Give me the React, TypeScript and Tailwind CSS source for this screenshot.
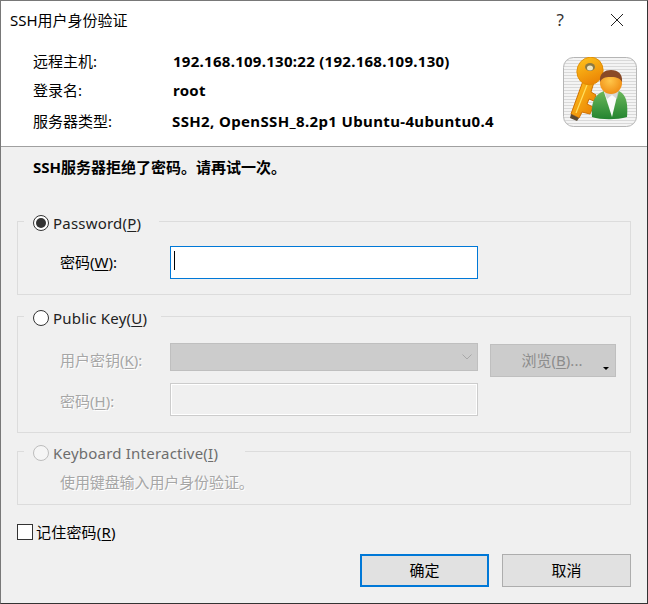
function KeyUserIcon() {
  return (
    <svg width="75" height="71" viewBox="0 0 75 71" className="shrink-0">
      <defs>
        <pattern id="stripes" width="3" height="3" patternUnits="userSpaceOnUse">
          <rect width="3" height="3" fill="#f4f4f4" />
          <rect width="3" height="1" fill="#d9d9d9" />
        </pattern>
        <linearGradient id="gold" x1="0" y1="0" x2="1" y2="1">
          <stop offset="0" stopColor="#ffc81e" />
          <stop offset="1" stopColor="#e87800" />
        </linearGradient>
        <radialGradient id="face" cx="0.45" cy="0.4" r="0.65">
          <stop offset="0" stopColor="#ffc64a" />
          <stop offset="1" stopColor="#ef8a10" />
        </radialGradient>
        <linearGradient id="coat" x1="0" y1="0" x2="0" y2="1">
          <stop offset="0" stopColor="#6cb85c" />
          <stop offset="1" stopColor="#23842f" />
        </linearGradient>
      </defs>
      <rect x="0.5" y="0.5" width="73" height="69" rx="10" fill="url(#stripes)" stroke="#b5b5b5" />
      {/* key */}
      <path d="M20 24 L8 57 L16 61 L19 55 L27 57 L30 50 L24 47 L26 42 L31 44 L33 38 L28 35 L31 25 Z" fill="url(#gold)" stroke="#d07000" strokeWidth="1" />
      <path d="M13 56 L24 28" stroke="#ffe060" strokeWidth="1.2" />
      <path d="M8 57 L16 61 L14 64 L7 61 Z" fill="#5b4a32" />
      <ellipse cx="27" cy="14" rx="13" ry="14" transform="rotate(22 27 14)" fill="url(#gold)" stroke="#e08a00" strokeWidth="0.8" />
      <ellipse cx="27" cy="10" rx="5" ry="4" fill="#8a7a45" />
      <ellipse cx="27" cy="11" rx="3" ry="2.5" fill="#eee6c4" />
      {/* person */}
      <path d="M29 60 C28 48 30 38 41 34 L56 34 C64 38 65 48 64 60 C54 63 38 63 29 60 Z" fill="url(#coat)" />
      <path d="M41 35 L49 60 L55 35 L52 32 L43 32 Z" fill="#fbfbfb" />
      <path d="M41 34 L44 42 L49 38 L54 42 L56 34 L50 31 L45 31 Z" fill="#c9c9c9" opacity="0.7" />
      <circle cx="48" cy="26" r="11" fill="url(#face)" />
      <path d="M37 25 C36 16 42 13 48 13 C55 13 60 17 59 25 C56 20 52 20 47 20 C42 20 39 21 37 25 Z" fill="#8a4a26" />
    </svg>
  )
}

function Key({ children }: { children: string }) {
  return <span className="underline underline-offset-2">{children}</span>
}

function Radio({ checked, dim }: { checked?: boolean; dim?: boolean }) {
  return (
    <span className={`w-4 h-4 rounded-full border flex items-center justify-center shrink-0 ${dim ? 'border-[#bdbdbd] bg-[#f5f5f5]' : 'border-[#333333] bg-white'}`}>
      {checked && <span className="w-[10px] h-[10px] rounded-full bg-[#333333]" />}
    </span>
  )
}

const dimText = 'text-[#a6a6a6] [text-shadow:1px_1px_0_#ffffff]'

export default function App() {
  return (
    <div className="w-[648px] h-[604px] flex flex-col overflow-hidden bg-[#f0f0f0] border border-[#787878] border-r-[#333333] border-b-[#333333] text-[15px] leading-5 text-black font-['Noto_Sans','Noto_Sans_CJK_SC',sans-serif]">

      {/* Header */}
      <div className="h-[146px] shrink-0 bg-white border-b border-[#a0a0a0] flex flex-col">
        <div className="flex items-center h-[38px] pl-[9px] pr-[23px]">
          <span className="flex-1">SSH用户身份验证</span>
          <span className="mr-[46px] text-[17px] text-[#333333]">?</span>
          <svg width="14" height="14" viewBox="0 0 14 14">
            <path d="M1 1 L13 13 M13 1 L1 13" stroke="#222222" strokeWidth="1" fill="none" />
          </svg>
        </div>
        <div className="flex pl-[32px] pr-[9px]">
          <div className="flex-1 flex flex-col pt-[12px]">
            <div className="flex"><span className="w-[140px]">远程主机:</span><b className="tracking-[0.28px]">192.168.109.130:22 (192.168.109.130)</b></div>
            <div className="flex mt-[9px]"><span className="w-[140px]">登录名:</span><b className="tracking-[0.28px]">root</b></div>
            <div className="flex mt-[11px]"><span className="w-[139px]">服务器类型:</span><b className="tracking-[0.36px]">SSH2, OpenSSH_8.2p1 Ubuntu-4ubuntu0.4</b></div>
          </div>
          <div className="pt-[18px]"><KeyUserIcon /></div>
        </div>
      </div>

      {/* Body */}
      <div className="flex-1 flex flex-col pl-[16px] pr-[16px]">
        <div className="pl-[16px] pt-[10px] h-[64px] font-bold">SSH服务器拒绝了密码。请再试一次。</div>

        <fieldset className="h-[84px] border border-[#dcdcdc] p-0">
          <legend className="ml-[6px] w-[135px] h-5 pl-[9px] pt-[4px] flex items-center gap-[4px]">
            <Radio checked />
            <span className="text-[#222222] tracking-[0.2px]">Password(<Key>P</Key>)</span>
          </legend>
          <div className="flex items-center mt-[15px] pl-[42px]">
            <span className="w-[110px] pb-[2px]">密码(<Key>W</Key>):</span>
            <div className="w-[308px] h-[33px] bg-white border border-[#0078d7] pl-[3px] pb-[4px] flex items-center">
              <span className="w-px h-[19px] bg-black" />
            </div>
          </div>
        </fieldset>

        <fieldset className="h-[127px] mt-[11px] border border-[#dcdcdc] p-0">
          <legend className="ml-[6px] w-[137px] h-5 pl-[9px] pt-[4px] flex items-center gap-[4px]">
            <Radio />
            <span className="text-[#222222] tracking-[0.2px]">Public Key(<Key>U</Key>)</span>
          </legend>
          <div className="flex flex-col gap-[12px] mt-[17px] pl-[42px]">
            <div className="flex items-start h-[28px]">
              <span className={`w-[110px] leading-[35px] ${dimText}`}>用户密钥(<Key>K</Key>):</span>
              <div className="w-[308px] h-[28px] bg-[#cccccc] border border-[#bfbfbf] flex items-center justify-end pr-[5px]">
                <svg width="10" height="6" viewBox="0 0 10 6">
                  <path d="M0.5 0.5 L5 5 L9.5 0.5" stroke="#a8a8a8" strokeWidth="1" fill="none" />
                </svg>
              </div>
              <button className="relative ml-[12px] mt-px w-[126px] h-[33px] pr-[2px] pb-[2px] bg-[#cccccc] border border-[#bfbfbf] text-[#8c8c8c]">
                浏览(<Key>B</Key>)...
                <span className="absolute right-[6px] bottom-[6px] w-0 h-0 border-x-[3px] border-x-transparent border-t-[3px] border-t-black" />
              </button>
            </div>
            <div className="flex items-center">
              <span className={`w-[110px] pt-[2px] ${dimText}`}>密码(<Key>H</Key>):</span>
              <div className="w-[308px] h-[33px] bg-[#f0f0f0] border border-[#cccccc] shadow-[inset_0_0_0_1px_#ffffff]" />
            </div>
          </div>
        </fieldset>

        <fieldset className="h-[64px] mt-[8px] border border-[#dcdcdc] p-0">
          <legend className="ml-[6px] w-[221px] h-5 pl-[9px] pt-[4px] flex items-center gap-[4px]">
            <Radio dim />
            <span className="text-[#6d6d6d] tracking-[0.22px]">Keyboard Interactive(<Key>I</Key>)</span>
          </legend>
          <div className={`pl-[42px] mt-[11px] tracking-[-0.1px] ${dimText}`}>使用键盘输入用户身份验证。</div>
        </fieldset>

        <div className="flex items-center gap-[3px] mt-[19px] h-4">
          <span className="w-4 h-4 bg-white border border-[#333333] shrink-0" />
          <span className="tracking-[0.2px]">记住密码(<Key>R</Key>)</span>
        </div>

        <div className="flex justify-end gap-[13px] mt-[14px]">
          <button className="w-[129px] h-[33px] pb-[2px] bg-[#e1e1e1] border-2 border-[#0078d7]">确定</button>
          <button className="w-[129px] h-[33px] pb-[2px] bg-[#e1e1e1] border border-[#adadad]">取消</button>
        </div>
      </div>
    </div>
  )
}
